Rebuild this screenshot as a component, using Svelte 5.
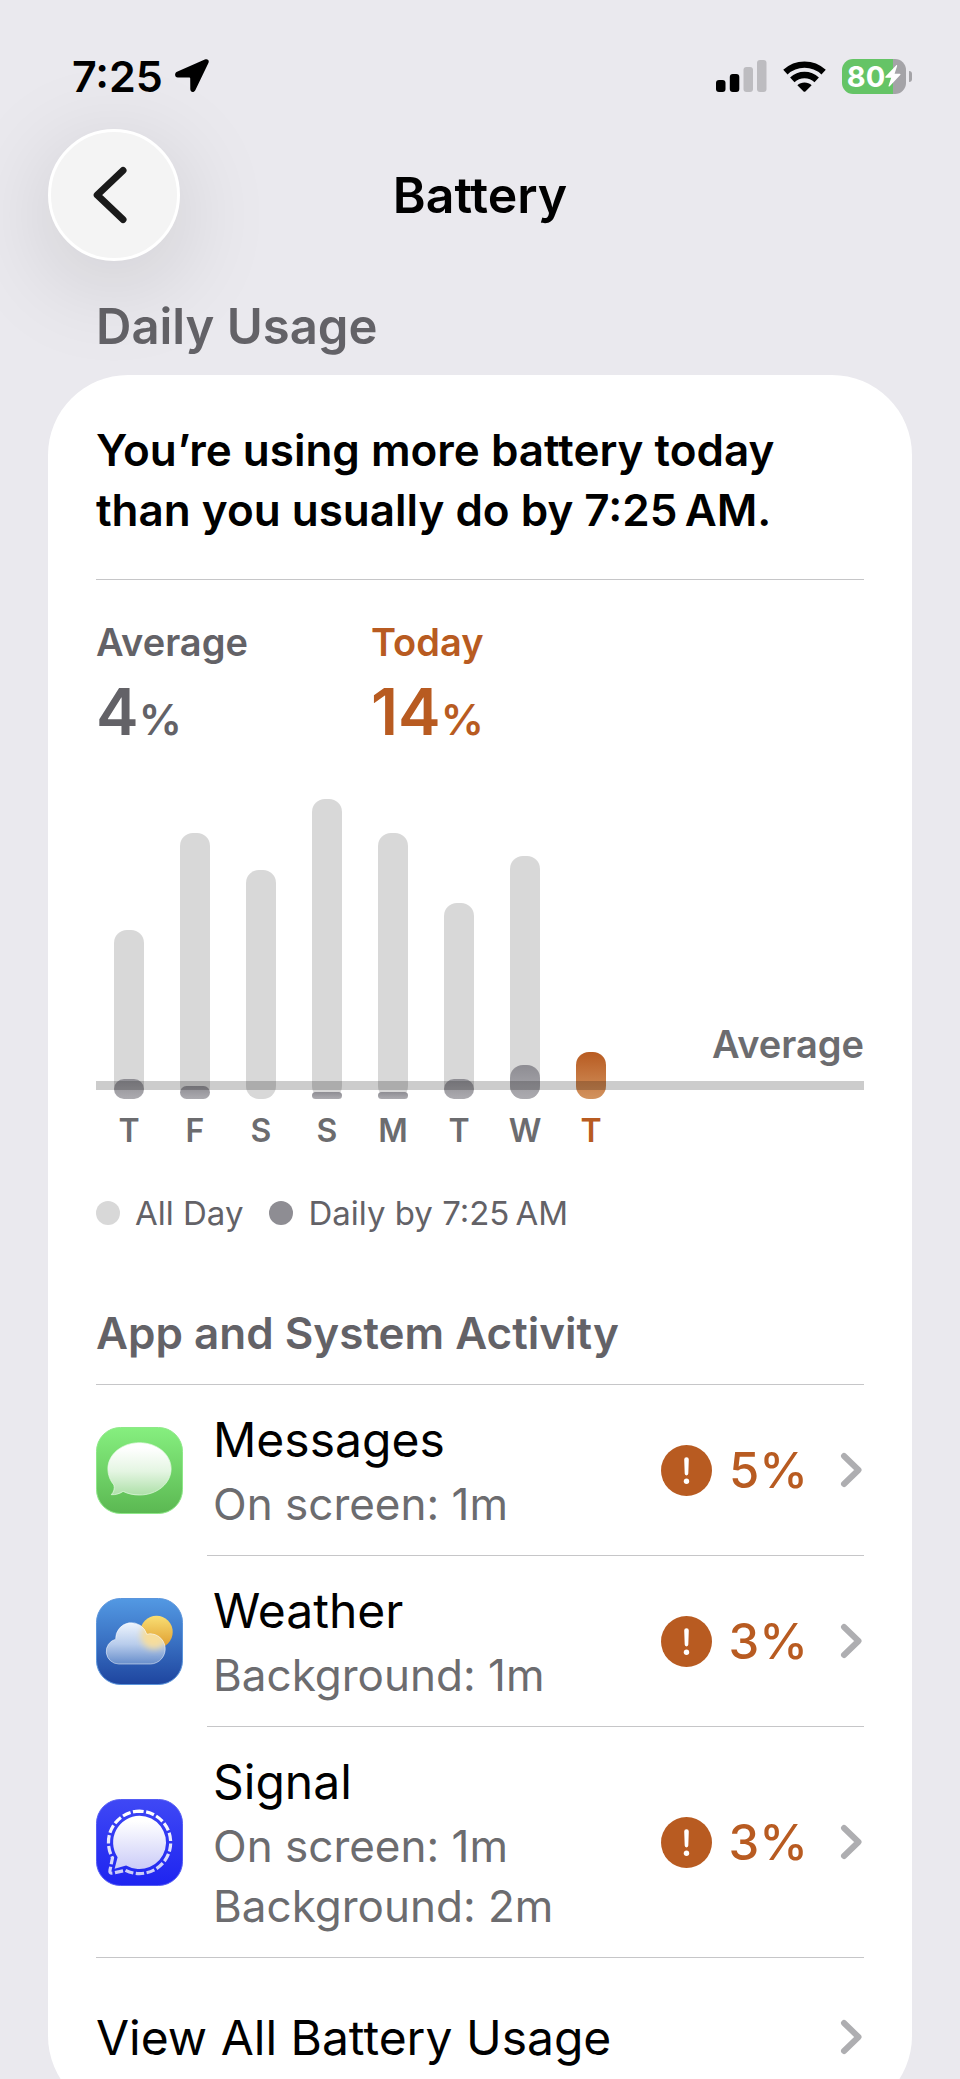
<script>
  const time = "7:25";
  const timeLabel = "7:25\u202FAM";

  // bar heights in px, "early" is the part used by the current time
  const days = [
    { label: "T", total: 169, early: 20 },
    { label: "F", total: 266, early: 13 },
    { label: "S", total: 229, early: 0 },
    { label: "S", total: 300, early: 7 },
    { label: "M", total: 266, early: 7 },
    { label: "T", total: 196, early: 20 },
    { label: "W", total: 243, early: 34 },
    { label: "T", total: 0, early: 47, today: true },
  ];

  const apps = [
    { icon: "messages", name: "Messages", details: ["On screen: 1m"], percent: 5 },
    { icon: "weather", name: "Weather", details: ["Background: 1m"], percent: 3 },
    { icon: "signal", name: "Signal", details: ["On screen: 1m", "Background: 2m"], percent: 3 },
  ];
</script>

{#snippet chevron()}
  <svg class="chevron" viewBox="0 0 24 36" aria-hidden="true">
    <path d="M4 4 18.5 18 4 32" />
  </svg>
{/snippet}

<div class="screen">
  <div class="status-bar">
    <div class="status-left">
      <span class="time">{time}</span>
      <svg width="34" height="34" viewBox="0 0 34 34" aria-hidden="true">
        <path d="M29.800.5 2 12.800C-1 14.400-.3 18.500 2.800 18.500H14c.8 0 1.200.3 1.200 1l.1 10.600c0 3.400 3.500 4 5 1.200L33.400 4C34.600 1.200 32.600-.7 29.800.5z" />
      </svg>
    </div>
    <div class="status-right">
      <svg width="51" height="32" viewBox="0 0 51 32" aria-hidden="true">
        <rect x="0" y="20" width="9.500" height="12" rx="3" />
        <rect x="13.800" y="14" width="9.500" height="18" rx="3" />
        <rect x="27.500" y="7" width="9.500" height="25" rx="3" fill="#bdbcc0" />
        <rect x="41" y="0" width="9.500" height="32" rx="3" fill="#bdbcc0" />
      </svg>
      <svg width="43" height="31" viewBox="0 0 43 31" aria-hidden="true">
        <path d="M2.400 11.200a28 28 0 0 1 38.200 0M9.300 18.800a17.800 17.800 0 0 1 24.400 0" fill="none" stroke="#000" stroke-width="6.400" />
        <path d="M14.400 24.200c3.600-3.600 10.600-3.600 14.200 0l-6.200 6.200q-.9.8-1.800 0z" />
      </svg>
      <div class="battery">
        <div class="battery-body">
          <span>80</span>
          <svg width="16" height="22" viewBox="0 0 16 22" aria-hidden="true">
            <path d="M11 .4.5 11.600c-.5.6-.3 1.200.5 1.200h5.200L3.600 20.600c-.3 1 .5 1.300 1.100.7L15.200 10c.6-.6.3-1.200-.5-1.200H9.600L12.100 1c.3-.8-.5-1.200-1.100-.6z" fill="#fff" />
          </svg>
        </div>
        <div class="battery-nub"></div>
      </div>
    </div>
  </div>

  <header>
    <button class="back" aria-label="Back">
      <svg width="34" height="58" viewBox="0 0 34 58" aria-hidden="true">
        <path d="M30 4.500 4.200 29 30 53.500" fill="none" stroke="#1a1a1a" stroke-width="7" stroke-linecap="round" stroke-linejoin="round" />
      </svg>
    </button>
    <h1>Battery</h1>
  </header>

  <main>
    <h2>Daily Usage</h2>
    <section class="card">
      <p class="summary">You’re using more battery today than you usually do by {timeLabel}.</p>

      <div class="stats">
        <div class="stat">
          <div class="stat-label">Average</div>
          <div class="stat-value">4<small>%</small></div>
        </div>
        <div class="stat today">
          <div class="stat-label">Today</div>
          <div class="stat-value">14<small>%</small></div>
        </div>
      </div>

      <div class="chart">
        <div class="bars">
          {#each days as day}
            <div class="slot">
              <div class="bar" style="height: {day.total || day.early}px" class:empty={!day.total}>
                <div class="early" class:orange={day.today} style="height: {day.early}px"></div>
              </div>
            </div>
          {/each}
        </div>
        <div class="average-line"><span>Average</span></div>
      </div>
      <div class="labels">
        {#each days as day}
          <span class:today={day.today}>{day.label}</span>
        {/each}
      </div>

      <div class="legend">
        <span class="key"><i class="dot"></i>All Day</span>
        <span class="key"><i class="dot dark"></i>Daily by {timeLabel}</span>
      </div>

      <h3>App and System Activity</h3>
      <div class="apps">
        {#each apps as app}
          <a class="app" href="#{app.icon}">
            {#if app.icon === "messages"}
              <svg class="app-icon" viewBox="0 0 87 87" aria-hidden="true">
                <defs>
                  <linearGradient id="msgBg" x2="0" y2="1">
                    <stop stop-color="#86ef7f" />
                    <stop offset="1" stop-color="#5bb852" />
                  </linearGradient>
                  <linearGradient id="msgBubble" x2="0" y2="1">
                    <stop offset=".1" stop-color="#fff" />
                    <stop offset=".55" stop-color="#e4f5e2" />
                    <stop offset="1" stop-color="#aee0a9" />
                  </linearGradient>
                </defs>
                <rect x=".5" y=".5" width="86" height="86" rx="24" fill="url(#msgBg)" stroke="#8ee888" />
                <path d="M43.500 15.700c17.600 0 31.600 11.600 31.600 26.100S61.100 68 43.500 68c-6 0-11.600-1.200-16.400-3.600-3.300 2.200-7.300 3.500-11.800 3.300 2.700-3 3.500-6.200 2.600-9.700-3.800-4.500-6-10-6-16.200 0-14.500 14-26.100 31.600-26.100z" fill="url(#msgBubble)" stroke="#e6fbe4" stroke-opacity=".7" />
              </svg>
            {:else if app.icon === "weather"}
              <svg class="app-icon" viewBox="0 0 87 87" aria-hidden="true">
                <defs>
                  <linearGradient id="skyBg" x2="0" y2="1">
                    <stop stop-color="#5399e3" />
                    <stop offset=".45" stop-color="#3c75c6" />
                    <stop offset="1" stop-color="#1e459f" />
                  </linearGradient>
                  <linearGradient id="sun" x2="0" y2="1">
                    <stop stop-color="#f9df74" />
                    <stop offset="1" stop-color="#de9a2c" />
                  </linearGradient>
                  <linearGradient id="cloud" x2="0" y2="1">
                    <stop stop-color="#f0f6fe" />
                    <stop offset=".5" stop-color="#b9cdec" />
                    <stop offset="1" stop-color="#6088c8" />
                  </linearGradient>
                  <clipPath id="cloudClip">
                    <path d="M22.800 66A12.600 12.600 0 0 1 19.700 41.200 15.800 15.800 0 0 1 50.700 36.200 15.100 15.100 0 1 1 54.600 66z" />
                  </clipPath>
                  <filter id="soften" x="-50%" y="-50%" width="200%" height="200%">
                    <feGaussianBlur stdDeviation="3" />
                  </filter>
                </defs>
                <rect x=".5" y=".5" width="86" height="86" rx="24" fill="url(#skyBg)" stroke="#5b95dc" />
                <circle cx="60.500" cy="34" r="16.200" fill="url(#sun)" />
                <g clip-path="url(#cloudClip)">
                  <rect width="87" height="44" y="24" fill="url(#cloud)" />
                  <circle cx="58" cy="38" r="13" fill="#f6dd9c" filter="url(#soften)" />
                </g>
                <path d="M22.800 66A12.600 12.600 0 0 1 19.700 41.200 15.800 15.800 0 0 1 50.700 36.200 15.100 15.100 0 1 1 54.600 66z" fill="none" stroke="#fff" stroke-opacity=".5" />
              </svg>
            {:else}
              <svg class="app-icon" viewBox="0 0 87 87" aria-hidden="true">
                <defs>
                  <linearGradient id="sigBg" x2="0" y2="1">
                    <stop stop-color="#3f48f5" />
                    <stop offset="1" stop-color="#1e24f0" />
                  </linearGradient>
                  <linearGradient id="sigBubble" x2="0" y2="1">
                    <stop offset=".1" stop-color="#fff" />
                    <stop offset="1" stop-color="#cbccf8" />
                  </linearGradient>
                </defs>
                <rect x=".5" y=".5" width="86" height="86" rx="24" fill="url(#sigBg)" stroke="#545cf4" />
                <path d="M43.500 12.200A31.200 31.200 0 1 1 29.500 71.300L17 74.100Q13.200 74.800 14 71.200L16.500 58.800A31.200 31.200 0 0 1 43.500 12.200" fill="none" stroke="url(#sigBubble)" stroke-width="3.200" stroke-dasharray="8.300 2.500" stroke-dashoffset="4.100" />
                <path d="M43.500 16.800a26.600 26.600 0 1 1-13.400 49.600L18.600 69.700l3-11.500A26.600 26.600 0 0 1 43.500 16.800z" fill="url(#sigBubble)" />
              </svg>
            {/if}
            <div class="app-body">
              <div class="app-text">
                <div class="app-name">{app.name}</div>
                {#each app.details as detail}
                  <div class="app-detail">{detail}</div>
                {/each}
              </div>
              <svg class="alert" viewBox="0 0 51 51" aria-hidden="true">
                <circle cx="25.500" cy="25.500" r="25.500" fill="#b85b21" />
                <path d="M23.200 14.600a2.300 2.300 0 0 1 4.600 0l-.5 14a1.800 1.800 0 0 1-3.600 0z" fill="#fff" />
                <circle cx="25.500" cy="36.300" r="2.700" fill="#fff" />
              </svg>
              <span class="percent">{app.percent}%</span>
              {@render chevron()}
            </div>
          </a>
        {/each}
      </div>

      <a class="view-all" href="#usage">
        <span>View All Battery Usage</span>
        {@render chevron()}
      </a>
    </section>
  </main>
</div>

<style>
  :global(body) {
    margin: 0;
    background: #eae9ee;
  }

  .screen {
    height: 100vh;
    overflow-y: auto;
    scrollbar-width: none;
    background: #eae9ee;
    color: #000;
    font-family: Inter, "Liberation Sans", sans-serif;
  }

  h1,
  h2,
  h3,
  p {
    margin: 0;
    font-weight: 600;
  }

  a {
    color: inherit;
    text-decoration: none;
  }

  svg {
    display: block;
    flex: none;
  }

  /* status bar */
  .status-bar {
    display: flex;
    justify-content: space-between;
    align-items: center;
    height: 64px;
    padding: 44px 48px 0 72px;
  }

  .status-left {
    display: flex;
    align-items: center;
    gap: 12px;
  }

  .time {
    font-size: 43px;
    font-weight: 600;
  }

  .status-right {
    display: flex;
    align-items: center;
    gap: 16px;
  }

  .battery {
    display: flex;
    align-items: center;
    gap: 3px;
  }

  .battery-body {
    display: flex;
    align-items: center;
    justify-content: center;
    width: 64px;
    height: 35px;
    border-radius: 11px;
    background: linear-gradient(to right, #65c466 80%, #a4a3a7 80%);
    color: #fff;
    font-size: 29px;
    font-weight: 700;
  }

  .battery-nub {
    width: 3px;
    height: 11px;
    border-radius: 0 3px 3px 0;
    background: #a4a3a7;
  }

  /* title bar */
  header {
    display: grid;
    grid-template-columns: 1fr auto 1fr;
    align-items: center;
    padding: 21px 48px 0;
  }

  .back {
    position: relative;
    z-index: 1;
    display: flex;
    align-items: center;
    justify-content: center;
    width: 132px;
    height: 132px;
    padding: 0 9px 0 0;
    border: 3px solid #fff;
    border-radius: 50%;
    background: #f4f4f4;
    box-shadow: 0 20px 100px rgba(0, 0, 0, 0.14);
    box-sizing: border-box;
    cursor: pointer;
  }

  h1 {
    font-size: 50px;
    line-height: 60px;
  }

  main {
    padding: 36px 48px;
  }

  h2 {
    padding: 0 48px 18px;
    color: #636267;
    font-size: 49px;
    line-height: 60px;
  }

  .card {
    padding: 45px 48px 0;
    border-radius: 80px;
    background: #fff;
  }

  .summary {
    padding-bottom: 39px;
    border-bottom: 1px solid #c6c6c8;
    font-size: 44px;
    line-height: 60px;
  }

  /* averages */
  .stats {
    display: flex;
    padding-top: 40px;
    color: #636267;
    font-weight: 600;
  }

  .stat {
    width: 275px;
  }

  .stat-label {
    font-size: 38px;
    line-height: 44px;
  }

  .stat-value {
    margin-top: 16px;
    font-size: 64px;
    line-height: 64px;
  }

  .stat-value small {
    font-size: 43px;
    line-height: 0;
  }

  .today {
    color: #b85b21;
  }

  /* chart */
  .chart {
    position: relative;
    margin-top: 55px;
  }

  .bars {
    display: flex;
    align-items: flex-end;
    height: 300px;
  }

  .slot {
    display: flex;
    justify-content: center;
    width: 66px;
  }

  .bar {
    display: flex;
    align-items: flex-end;
    width: 30px;
    border-radius: 13px;
    background: #d8d8d8;
  }

  .bar.empty {
    background: none;
  }

  .early {
    width: 100%;
    border-radius: 13px;
    background: linear-gradient(#8e8d93, #acabb0);
  }

  .early.orange {
    background: linear-gradient(#b85b21, #d2935f);
  }

  /* lies across the bars */
  .average-line {
    position: absolute;
    right: 0;
    bottom: 9px;
    left: 0;
    border-bottom: 9px solid rgba(0, 0, 0, 0.2);
    color: #6c6c6f;
    font-size: 38px;
    font-weight: 600;
    line-height: 44px;
    text-align: right;
  }

  .average-line span {
    display: block;
    padding-bottom: 15px;
  }

  .labels {
    display: flex;
    margin-top: 12px;
    color: #6c6c6f;
    font-size: 32px;
    font-weight: 600;
    line-height: 40px;
    text-align: center;
  }

  .labels span {
    width: 66px;
  }

  .labels .today {
    color: #b85b21;
  }

  .legend {
    display: flex;
    gap: 26px;
    margin-top: 42px;
    color: #636267;
    font-size: 33px;
    line-height: 40px;
  }

  .key {
    display: flex;
    align-items: center;
    gap: 15px;
  }

  .dot {
    width: 24px;
    height: 24px;
    border-radius: 50%;
    background: #d8d8d8;
  }

  .dot.dark {
    background: #8e8d93;
  }

  h3 {
    margin-top: 70px;
    padding-bottom: 21px;
    border-bottom: 1px solid #c6c6c8;
    color: #636267;
    font-size: 44px;
    line-height: 60px;
  }

  /* app list */
  .apps {
    border-bottom: 1px solid #c6c6c8;
  }

  .app {
    display: flex;
    align-items: center;
    gap: 24px;
  }

  .app-icon {
    width: 87px;
    height: 87px;
  }

  .app-body {
    display: flex;
    flex: 1;
    align-items: center;
    padding: 21px 0 21px 6px;
    border-bottom: 1px solid #c6c6c8;
  }

  .app:last-child .app-body {
    border-bottom: 0;
  }

  .app-text {
    flex: 1;
  }

  .app-name,
  .view-all {
    font-size: 48px;
  }

  .app-name {
    line-height: 68px;
  }

  .app-detail {
    color: #6c6c6f;
    font-size: 44px;
    line-height: 60px;
  }

  .alert {
    width: 51px;
    height: 51px;
  }

  .percent {
    min-width: 76px;
    margin: 0 32px 0 17px;
    color: #b85b21;
    font-size: 49px;
    font-weight: 500;
  }

  .chevron {
    width: 24px;
    height: 36px;
    fill: none;
    stroke: #aeaeb1;
    stroke-width: 6;
    stroke-linecap: round;
    stroke-linejoin: round;
  }

  .view-all {
    display: flex;
    justify-content: space-between;
    align-items: center;
    height: 158px;
  }
</style>
